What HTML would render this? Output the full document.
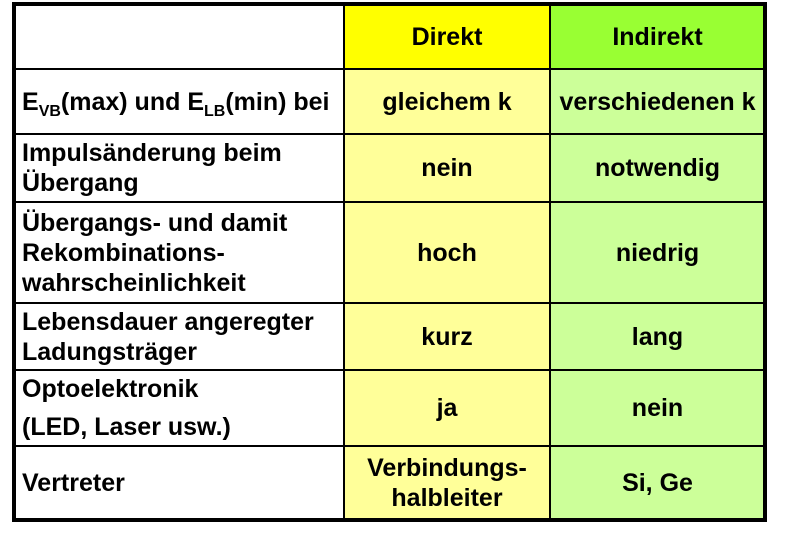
<!DOCTYPE html>
<html><head><meta charset="utf-8"><style>
body{margin:0;background:#fff;width:789px;height:533px;position:relative;overflow:hidden;font-family:"Liberation Sans",Arial,sans-serif;font-weight:bold;font-size:25px;color:#000}
.c{position:absolute;display:flex;align-items:center;line-height:30px;box-sizing:border-box;white-space:nowrap}
.l{padding-left:8px}
.m{justify-content:center;text-align:center}
.h{position:absolute;background:#000}
sub{font-size:16px;vertical-align:-6px;line-height:0}
</style></head><body>
<div class="c" style="left:14px;top:4px;width:330px;height:65px;background:#fff"></div>
<div class="c m" style="left:344px;top:4px;width:206px;height:65px;background:#ffff00"><span>Direkt</span></div>
<div class="c m" style="left:550px;top:4px;width:215px;height:65px;background:#99ff33"><span>Indirekt</span></div>

<div class="c m" style="left:344px;top:69px;width:206px;height:451px;background:#ffff99"></div>
<div class="c m" style="left:550px;top:69px;width:215px;height:451px;background:#ccff99"></div>

<div class="c l" style="left:14px;top:69px;width:330px;height:65px"><span>E<sub>VB</sub>(max) und E<sub>LB</sub>(min) bei</span></div>
<div class="c m" style="left:344px;top:69px;width:206px;height:65px"><span>gleichem k</span></div>
<div class="c m" style="left:550px;top:69px;width:215px;height:65px"><span>verschiedenen k</span></div>

<div class="c l" style="left:14px;top:134px;width:330px;height:68px"><span>Impulsänderung beim<br>Übergang</span></div>
<div class="c m" style="left:344px;top:134px;width:206px;height:68px"><span>nein</span></div>
<div class="c m" style="left:550px;top:134px;width:215px;height:68px"><span>notwendig</span></div>

<div class="c l" style="left:14px;top:202px;width:330px;height:101px"><span>Übergangs- und damit<br>Rekombinations-<br>wahrscheinlichkeit</span></div>
<div class="c m" style="left:344px;top:202px;width:206px;height:101px"><span>hoch</span></div>
<div class="c m" style="left:550px;top:202px;width:215px;height:101px"><span>niedrig</span></div>

<div class="c l" style="left:14px;top:303px;width:330px;height:67px"><span>Lebensdauer angeregter<br>Ladungsträger</span></div>
<div class="c m" style="left:344px;top:303px;width:206px;height:67px"><span>kurz</span></div>
<div class="c m" style="left:550px;top:303px;width:215px;height:67px"><span>lang</span></div>

<div class="c l" style="left:14px;top:370px;width:330px;height:76px;line-height:38px"><span>Optoelektronik<br>(LED, Laser usw.)</span></div>
<div class="c m" style="left:344px;top:370px;width:206px;height:76px"><span>ja</span></div>
<div class="c m" style="left:550px;top:370px;width:215px;height:76px"><span>nein</span></div>

<div class="c l" style="left:14px;top:446px;width:330px;height:74px"><span>Vertreter</span></div>
<div class="c m" style="left:344px;top:446px;width:206px;height:74px;line-height:30px"><span>Verbindungs-<br>halbleiter</span></div>
<div class="c m" style="left:550px;top:446px;width:215px;height:74px"><span>Si, Ge</span></div>

<div class="h" style="left:12px;top:2px;width:755px;height:4px"></div>
<div class="h" style="left:12px;top:518px;width:755px;height:4px"></div>
<div class="h" style="left:12px;top:2px;width:4px;height:520px"></div>
<div class="h" style="left:763px;top:2px;width:4px;height:520px"></div>
<div class="h" style="left:343px;top:2px;width:2px;height:520px"></div>
<div class="h" style="left:549px;top:2px;width:2px;height:520px"></div>
<div class="h" style="left:12px;top:68px;width:755px;height:2px"></div>
<div class="h" style="left:12px;top:133px;width:755px;height:2px"></div>
<div class="h" style="left:12px;top:201px;width:755px;height:2px"></div>
<div class="h" style="left:12px;top:302px;width:755px;height:2px"></div>
<div class="h" style="left:12px;top:369px;width:755px;height:2px"></div>
<div class="h" style="left:12px;top:445px;width:755px;height:2px"></div>
</body></html>
